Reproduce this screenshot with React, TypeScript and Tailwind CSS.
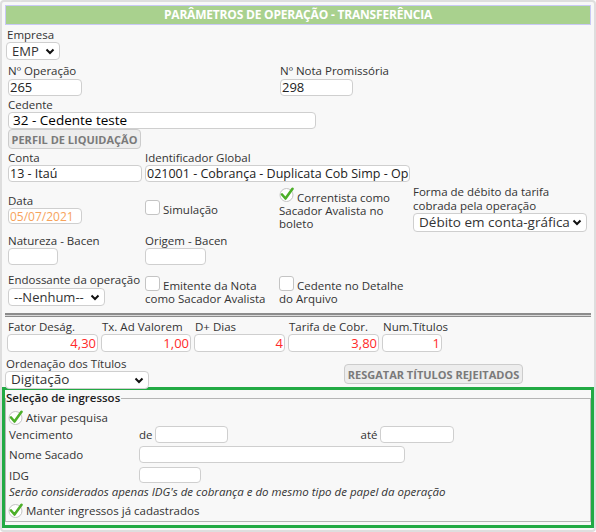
import React from 'react';

const font = "font-['Open_Sans',sans-serif]";

function Check({ on }: { on?: boolean }) {
  if (!on) {
    return <span className="inline-block w-[15px] h-[15px] shrink-0 rounded-[3px] border border-[#c4c4c4] bg-white" />;
  }
  return (
    <svg width="16" height="15" viewBox="0 0 16 15" className="shrink-0">
      <circle cx="7.5" cy="8" r="6.5" fill="#fff" stroke="#c4c4c4" strokeWidth="1" />
      <path d="M3 7.5 L6.5 11.5 L13.5 1.8" fill="none" stroke="#4caf29" strokeWidth="2.6" strokeLinecap="round" strokeLinejoin="round" />
    </svg>
  );
}

function Input({ w, h = 'h-[17px]', value, className = '' }: { w: string; h?: string; value?: string; className?: string }) {
  return (
    <div className={`${w} ${h} bg-white border border-[#cfcfcf] rounded-[4px] px-[1px] leading-[15px] overflow-hidden whitespace-nowrap ${className}`}>
      {value}
    </div>
  );
}

function Select({ w, h = 'h-[18px]', value, big }: { w: string; h?: string; value: string; big?: boolean }) {
  return (
    <div className={`${w} ${h} bg-white border border-[#cfcfcf] rounded-[4px] flex items-center justify-between pl-[5px] pr-[4px] whitespace-nowrap ${big ? 'text-[13.5px]' : 'text-[13px]'} text-[#333]`}>
      <span className="leading-none">{value}</span>
      <svg width="10" height="7" viewBox="0 0 10 7" className="shrink-0">
        <path d="M1.5 1.5 L5 5 L8.5 1.5" fill="none" stroke="#111" strokeWidth="2" />
      </svg>
    </div>
  );
}

function Label({ children, className = '' }: { children: React.ReactNode; className?: string }) {
  return <div className={`h-[14px] leading-[14px] text-[#333] whitespace-nowrap ${className}`}>{children}</div>;
}

export default function App() {
  return (
    <div className={`${font} w-[596px] h-[532px] bg-white text-[11.5px] text-[#333]`}>
      <div className="w-[596px] h-[532px] border-2 border-[#dedede] rounded-[4px] bg-[#f8f8f8] pt-[3px]">
        <div className="mx-[3px] h-[20px] bg-[#a9d18e] border border-[#c9c9f5] text-white font-bold text-[12px] flex items-center justify-center tracking-[-0.2px]">
          PARÂMETROS DE OPERAÇÃO - TRANSFERÊNCIA
        </div>

        <div className="pl-[6px]">
          <Label className="mt-[3px] -ml-[1px]">Empresa</Label>
          <div className="-ml-[2px]">
            <Select w="w-[54px]" value="EMP" />
          </div>

          <div className="flex mt-[4px]">
            <div className="w-[272px]">
              <Label className="h-[15px]">Nº Operação</Label>
              <Input w="w-[74px]" value="265" className="text-[13px] text-[#222]" />
            </div>
            <div>
              <Label className="h-[15px]">Nº Nota Promissória</Label>
              <Input w="w-[73px]" value="298" className="text-[13px] text-[#222]" />
            </div>
          </div>

          <Label className="mt-[2px]">Cedente</Label>
          <div className="w-[308px] h-[17px] bg-white border border-[#cfcfcf] rounded-[4px] pl-[4px] text-[13.5px] text-black leading-[15px]">
            32 - Cedente teste
          </div>
          <button className="block h-[20px] w-[133px] bg-[#ededed] border border-[#cccccc] rounded-[4px] text-[#7a7a7a] font-bold text-[11px] leading-none">
            PERFIL DE LIQUIDAÇÃO
          </button>

          <div className="flex mt-[2px]">
            <div className="w-[137px]">
              <Label>Conta</Label>
              <Input w="w-[134px]" value="13 - Itaú" className="text-[12.5px] text-[#222]" />
            </div>
            <div>
              <Label>Identificador Global</Label>
              <Input w="w-[265px]" value="021001 - Cobrança - Duplicata Cob Simp - Op" className="text-[12.5px] text-[#222]" />
            </div>
          </div>

          <div className="flex h-[50px] mt-[2px]">
            <div className="w-[137px] pt-[10px]">
              <Label className="h-[13px]">Data</Label>
              <Input w="w-[74px]" h="h-[16px]" value="05/07/2021" className="text-[12px] text-[#f7a35c] leading-[14px]" />
            </div>
            <div className="w-[134px] pt-[16px] flex items-start gap-[3px]">
              <Check />
              <span className="mt-[3px] leading-[14px]">Simulação</span>
            </div>
            <div className="w-[134px] pt-[3px] leading-[13px]">
              <div className="flex items-start gap-[2px] h-[17px]">
                <Check on />
                <span className="mt-[4px]">Correntista como</span>
              </div>
              <div>Sacador Avalista no</div>
              <div>boleto</div>
            </div>
            <div className="pt-[1px]">
              <div className="leading-[14px] w-[172px]">
                <div>Forma de débito da tarifa</div>
                <div>cobrada pela operação</div>
              </div>
              <Select w="w-[174px]" h="h-[19px]" value="Débito em conta-gráfica" big />
            </div>
          </div>

          <div className="flex">
            <div className="w-[137px]">
              <Label>Natureza - Bacen</Label>
              <Input w="w-[50px]" />
            </div>
            <div>
              <Label>Origem - Bacen</Label>
              <Input w="w-[61px]" />
            </div>
          </div>

          <div className="flex mt-[8px] h-[33px]">
            <div className="w-[137px]">
              <Label className="h-[15px]">Endossante da operação</Label>
              <Select w="w-[97px]" value="--Nenhum--" />
            </div>
            <div className="w-[134px] pt-[3px] leading-[13px]">
              <div className="flex items-start gap-[3px] h-[16px]">
                <Check />
                <span className="mt-[3px]">Emitente da Nota</span>
              </div>
              <div>como Sacador Avalista</div>
            </div>
            <div className="pt-[3px] leading-[13px]">
              <div className="flex items-start gap-[3px] h-[16px]">
                <Check />
                <span className="mt-[3px]">Cedente no Detalhe</span>
              </div>
              <div>do Arquivo</div>
            </div>
          </div>
        </div>

        <div className="mx-[3px] mt-[7px] h-[4px] border-t-2 border-b-[1.5px] border-[#8c8c8c] bg-[#d8d8d8]" />

        <div className="flex gap-[3px] pl-[5px] mt-[3px]">
          {[
            ['Fator Deság.', '4,30', 'w-[91px]'],
            ['Tx. Ad Valorem', '1,00', 'w-[90px]'],
            ['D+ Dias', '4', 'w-[91px]'],
            ['Tarifa de Cobr.', '3,80', 'w-[91px]'],
            ['Num.Títulos', '1', 'w-[60px]'],
          ].map(([l, v, w]) => (
            <div key={l}>
              <Label className="pl-[1px]">{l}</Label>
              <Input w={w} h="h-[18px]" value={v} className="text-right text-[13px] text-[#ff2a2a] leading-[16px]" />
            </div>
          ))}
        </div>

        <div className="flex items-start h-[30px] mt-[5px] pl-[3px]">
          <div className="w-[339px]">
            <Label className="pl-[1px]">Ordenação dos Títulos</Label>
            <Select w="w-[144px]" value="Digitação" big />
          </div>
          <button className="mt-[7px] h-[20px] w-[179px] bg-[#ededed] border border-[#cccccc] rounded-[4px] text-[#7a7a7a] font-bold text-[11px] leading-none">
            RESGATAR TÍTULOS REJEITADOS
          </button>
        </div>

        <div className="h-[141px] border-[3px] border-[#22aa44] pt-[1px] pb-[3px] px-0">
          <fieldset className="h-full border border-[#b5b5b5] px-[2px]">
            <legend className="text-[#222] font-semibold text-[11.5px] leading-[14px] -ml-[2px] pr-[1px]">Seleção de ingressos</legend>
            <div className="flex items-center gap-[2px] mt-[5px] h-[15px]">
              <Check on />
              <span className="leading-[14px] mt-[1px]">Ativar pesquisa</span>
            </div>
            <div className="flex items-center mt-[1px] pl-[1px]">
              <span className="w-[130px]">Vencimento</span>
              <span className="mr-[2px]">de</span>
              <Input w="w-[73px]" />
              <span className="ml-[133px] mr-[3px]">até</span>
              <Input w="w-[74px]" />
            </div>
            <div className="flex items-center mt-[3px] pl-[1px]">
              <span className="w-[130px]">Nome Sacado</span>
              <Input w="w-[266px]" />
            </div>
            <div className="flex items-center mt-[3px] pl-[1px]">
              <span className="w-[130px]">IDG</span>
              <Input w="w-[62px]" h="h-[16px]" />
            </div>
            <div className="italic mt-[1px] pl-[1px] leading-[14px] text-[#333]">
              Serão considerados apenas IDG's de cobrança e do mesmo tipo de papel da operação
            </div>
            <div className="flex items-center gap-[2px] mt-[4px] h-[15px]">
              <Check on />
              <span className="leading-[14px] mt-[1px]">Manter ingressos já cadastrados</span>
            </div>
          </fieldset>
        </div>
      </div>
    </div>
  );
}
